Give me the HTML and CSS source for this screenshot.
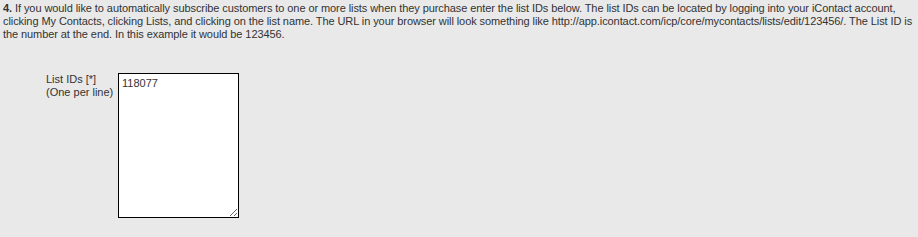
FILE: index.html
```html
<!DOCTYPE html>
<html>
<head>
<meta charset="utf-8">
<link rel="stylesheet" href="styles.css">
</head>
<body>
<div class="panel">
<p class="intro"><b>4.</b> If you would like to automatically subscribe customers to one or more lists when they purchase enter the list IDs below. The list IDs can be located by logging into your iContact account, clicking My Contacts, clicking Lists, and clicking on the list name. The URL in your browser will look something like http://app.icontact.com/icp/core/mycontacts/lists/edit/123456/. The List ID is the number at the end. In this example it would be 123456.</p>
<div class="row">
<label class="label" for="ids">List IDs [*]<br>(One per line)</label>
<textarea id="ids" class="ids">118077</textarea>
</div>
</div>
</body>
</html>
```
FILE: styles.css
```css
html, body {
  margin: 0;
  padding: 0;
  background: #e9e9e9;
}
.panel {
  width: 918px;
  height: 237px;
  box-sizing: border-box;
  padding: 2px 1px 0 3px;
  font-family: "Liberation Sans", Arial, sans-serif;
  font-size: 11px;
  line-height: 13px;
  letter-spacing: -0.08px;
  color: #333333;
}
.intro {
  margin: 0;
  width: 913px;
}
.row {
  display: flex;
  align-items: flex-start;
  margin-top: 32px;
  padding-left: 43px;
}
.label {
  width: 66px;
  margin-right: 6px;
  white-space: nowrap;
  letter-spacing: 0;
  color: #333333;
}
.ids {
  width: 121px;
  height: 145px;
  box-sizing: border-box;
  margin: 0;
  border: 1px solid #000;
  padding: 3px 3px;
  background: #fff;
  font-family: "Liberation Sans", Arial, sans-serif;
  font-size: 11px;
  line-height: 13px;
  color: #333;
  outline: none;
}
```
